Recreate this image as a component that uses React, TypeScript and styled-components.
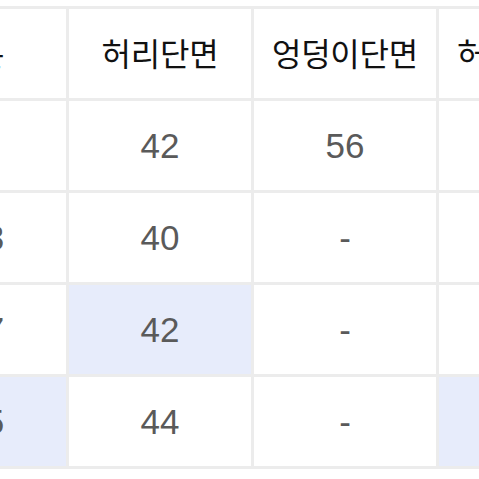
import React from "react";
import styled, { createGlobalStyle } from "styled-components";

const Global = createGlobalStyle`
  html, body { margin: 0; padding: 0; background: #ffffff; }
  body { width: 479px; height: 479px; overflow: hidden; }
`;

const Viewport = styled.div`
  width: 479px;
  height: 479px;
  overflow: hidden;
  padding-top: 6px;
  box-sizing: border-box;
  background: #fff;
`;

const Table = styled.div`
  display: grid;
  grid-template-columns: repeat(4, 182px);
  grid-auto-rows: 89px;
  gap: 3px;
  padding: 3px;
  width: max-content;
  margin-left: -119px;
  background: #ececec;
`;

const Cell = styled.div<{ $hl?: boolean; $head?: boolean }>`
  display: flex;
  align-items: center;
  justify-content: center;
  white-space: nowrap;
  background: ${(p) => (p.$hl ? "#e7ecfb" : "#ffffff")};
  color: ${(p) => (p.$head ? "#111111" : "#5a5a5a")};
  font-family: ${(p) =>
    p.$head
      ? '"Noto Sans CJK KR", "Noto Sans", sans-serif'
      : '"Liberation Sans", Arial, sans-serif'};
  font-size: ${(p) => (p.$head ? "32px" : "35px")};
  font-weight: 400;
  padding-bottom: ${(p) => (p.$head ? "4px" : "0")};
  letter-spacing: ${(p) => (p.$head ? "-0.2px" : "0")};
`;

const head = ["구분", "허리단면", "엉덩이단면", "허벅지단면"];
const rows: { v: string[]; hl: number[] }[] = [
  { v: ["S", "42", "56", ""], hl: [] },
  { v: ["243", "40", "-", ""], hl: [] },
  { v: ["247", "42", "-", ""], hl: [1] },
  { v: ["255", "44", "-", ""], hl: [0, 3] },
];

export default function App() {
  return (
    <>
      <Global />
      <Viewport>
        <Table>
          {head.map((h) => (
            <Cell key={h} $head>
              {h}
            </Cell>
          ))}
          {rows.map((r, i) =>
            r.v.map((v, j) => (
              <Cell key={`${i}-${j}`} $hl={r.hl.includes(j)}>
                {v}
              </Cell>
            ))
          )}
        </Table>
      </Viewport>
    </>
  );
}
